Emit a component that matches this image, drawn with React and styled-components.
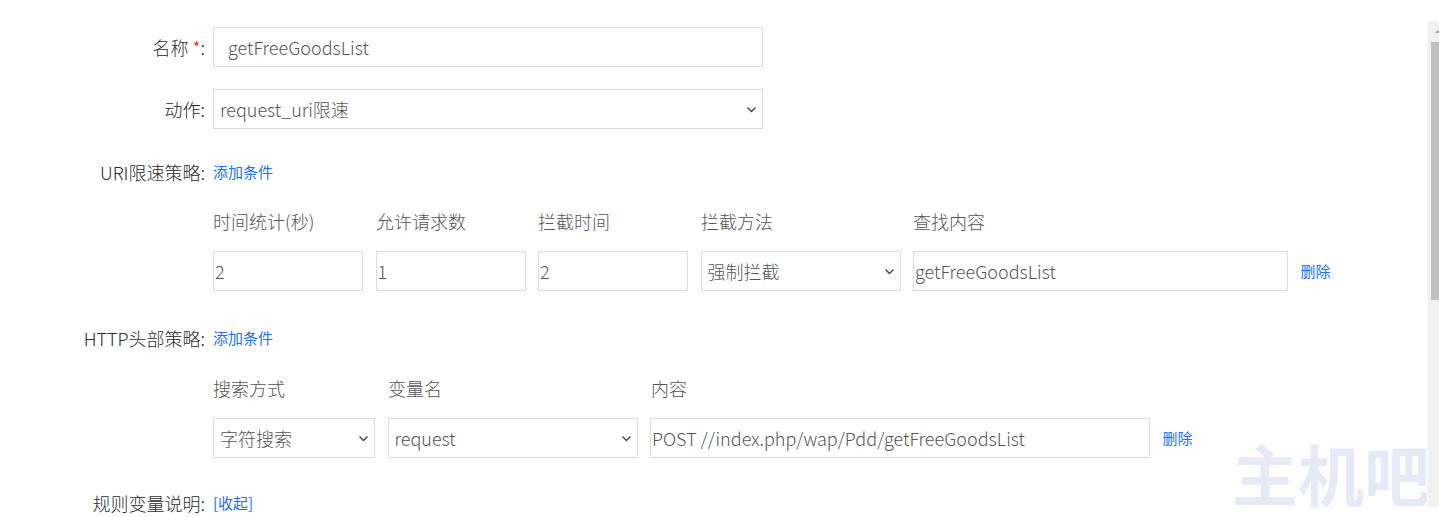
import React from "react";
import styled, { createGlobalStyle } from "styled-components";

const Global = createGlobalStyle`
  html, body { margin: 0; padding: 0; background: #fff; }
  body { font-family: "Noto Sans CJK SC", "Noto Sans", sans-serif; color: #333; overflow: hidden; }
  * { box-sizing: border-box; }
`;

const Page = styled.div`
  position: relative;
  width: 1439px;
  height: 517px;
  overflow: hidden;
  padding-top: 27px;
`;

const Row = styled.div`
  display: flex;
  align-items: center;
  margin-bottom: ${(p) => p.$mb || 0}px;
`;

const Label = styled.div`
  width: 213px;
  flex: none;
  padding-right: 8px;
  text-align: right;
  font-size: 18px;
  font-weight: 300;
  line-height: 20px;
  color: #2b2b2b;
  white-space: nowrap;
`;

const Star = styled.span`
  color: #e60000;
`;

const TextInput = styled.input`
  width: ${(p) => p.$w}px;
  height: 40px;
  flex: none;
  border: 1px solid #dcdcdc;
  padding: 0 ${(p) => p.$pad ?? 1}px;
  font-family: inherit;
  font-size: 18px;
  font-weight: 300;
  color: #555;
  outline: none;
  background: #fff;
`;

const SelectWrap = styled.div`
  position: relative;
  width: ${(p) => p.$w}px;
  height: 40px;
  flex: none;
`;

const Select = styled.select`
  width: 100%;
  height: 100%;
  appearance: none;
  -webkit-appearance: none;
  border: 1px solid #dcdcdc;
  padding: 0 24px 0 6px;
  font-family: inherit;
  font-size: 18px;
  font-weight: 300;
  color: #555;
  background: #fff;
  outline: none;
`;

const Chevron = styled.svg`
  position: absolute;
  right: 6px;
  top: 17px;
  pointer-events: none;
`;

const Link = styled.a`
  font-size: 15px;
  font-weight: 400;
  line-height: 20px;
  color: #1b6ff5;
  text-decoration: none;
  cursor: pointer;
`;

const Sub = styled.div`
  padding-left: 213px;
  margin-bottom: ${(p) => p.$mb || 0}px;
`;

const HeadRow = styled.div`
  display: flex;
  margin-bottom: 20px;
`;

const Head = styled.div`
  width: ${(p) => p.$w}px;
  flex: none;
  font-size: 18px;
  font-weight: 300;
  line-height: 20px;
  color: #555;
  white-space: nowrap;
`;

const FieldRow = styled.div`
  display: flex;
  align-items: center;
  gap: 12.5px;
`;

const Watermark = styled.div`
  position: absolute;
  left: 1232px;
  top: 430px;
  font-family: "Noto Sans CJK SC", serif;
  font-weight: 700;
  font-size: 66px;
  line-height: 84px;
  color: #e5ebf6;
  white-space: nowrap;
  pointer-events: none;
`;

const Scrollbar = styled.div`
  position: absolute;
  left: 1427px;
  top: 21px;
  width: 12px;
  height: 486px;
  background: #f1f1f1;
  border-left: 1px solid #f7f7f7;
`;

const Thumb = styled.div`
  position: absolute;
  left: 3px;
  top: 21px;
  width: 8px;
  height: 258px;
  background: #c1c1c1;
`;

const UpArrow = styled.div`
  position: absolute;
  left: 7px;
  top: 9px;
  width: 0;
  height: 0;
  border-left: 3px solid transparent;
  border-right: 3px solid transparent;
  border-bottom: 3px solid #a3a3a3;
`;

function Sel({ w, value, options }) {
  return (
    <SelectWrap $w={w}>
      <Select defaultValue={value}>
        {options.map((o) => (
          <option key={o}>{o}</option>
        ))}
      </Select>
      <Chevron width="11" height="7" viewBox="0 0 11 7">
        <path d="M1.5 1.5 L5.5 5.5 L9.5 1.5" fill="none" stroke="#444" strokeWidth="1.4" />
      </Chevron>
    </SelectWrap>
  );
}

export default function App() {
  return (
    <>
      <Global />
      <Page>
        <Row $mb={22}>
          <Label>
            名称 <Star>*</Star>:
          </Label>
          <TextInput $w={550} $pad={14} defaultValue="getFreeGoodsList" />
        </Row>
        <Row $mb={33}>
          <Label>动作:</Label>
          <Sel w={550} value="request_uri限速" options={["request_uri限速", "ip限速"]} />
        </Row>
        <Row $mb={29}>
          <Label>URI限速策略:</Label>
          <Link>添加条件</Link>
        </Row>
        <Sub $mb={37}>
          <HeadRow>
            <Head $w={163}>时间统计(秒)</Head>
            <Head $w={162}>允许请求数</Head>
            <Head $w={163}>拦截时间</Head>
            <Head $w={212}>拦截方法</Head>
            <Head $w={300}>查找内容</Head>
          </HeadRow>
          <FieldRow>
            <TextInput $w={150} defaultValue="2" />
            <TextInput $w={150} defaultValue="1" />
            <TextInput $w={150} defaultValue="2" />
            <Sel w={200} value="强制拦截" options={["强制拦截", "人机验证"]} />
            <TextInput $w={375} defaultValue="getFreeGoodsList" />
            <Link>删除</Link>
          </FieldRow>
        </Sub>
        <Row $mb={30}>
          <Label>HTTP头部策略:</Label>
          <Link>添加条件</Link>
        </Row>
        <Sub $mb={35}>
          <HeadRow>
            <Head $w={175}>搜索方式</Head>
            <Head $w={263}>变量名</Head>
            <Head $w={300}>内容</Head>
          </HeadRow>
          <FieldRow>
            <Sel w={162} value="字符搜索" options={["字符搜索", "正则搜索"]} />
            <Sel w={250} value="request" options={["request", "user-agent", "referer"]} />
            <TextInput $w={500} defaultValue="POST //index.php/wap/Pdd/getFreeGoodsList" />
            <Link>删除</Link>
          </FieldRow>
        </Sub>
        <Row>
          <Label>规则变量说明:</Label>
          <Link>[收起]</Link>
        </Row>
        <Watermark>主机吧</Watermark>
        <Scrollbar>
          <UpArrow />
          <Thumb />
        </Scrollbar>
      </Page>
    </>
  );
}
